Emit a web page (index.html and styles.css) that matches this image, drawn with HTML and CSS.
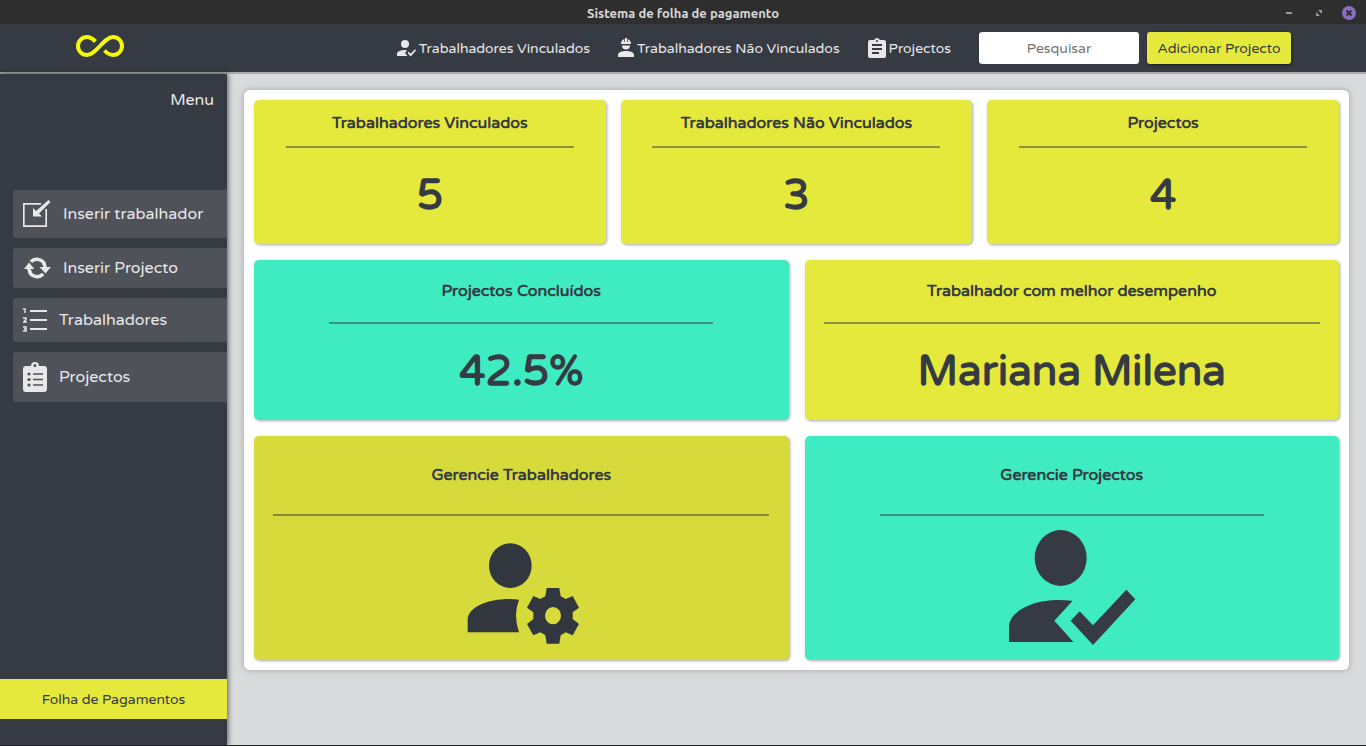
FILE: index.html
```html
<!DOCTYPE html>
<html lang="pt">
<head>
<meta charset="utf-8">
<title>Sistema de folha de pagamento</title>
<link rel="stylesheet" href="styles.css">
</head>
<body>
<div class="titlebar">
  <span></span>
  <span class="titlebar-text">Sistema de folha de pagamento</span>
  <div class="window-controls">
    <button type="button" aria-label="Minimizar"><svg width="14" height="14" viewBox="0 0 14 14"><path d="M4 6h6v2H4z" fill="#999"/></svg></button>
    <button type="button" aria-label="Restaurar"><svg width="14" height="14" viewBox="0 0 14 14"><path d="M6 4h4v4zM4 6v4h4z" fill="#999"/></svg></button>
    <button type="button" aria-label="Fechar"><svg width="14" height="14" viewBox="0 0 14 14"><circle cx="7" cy="7" r="7" fill="#8c6cc0"/><path d="M4.5 4.5l5 5m0-5l-5 5" stroke="#2e2e2e" stroke-width="1.8"/></svg></button>
  </div>
</div>
<header class="navbar">
  <a class="logo" href="#" aria-label="Início"><svg width="48" height="22" viewBox="0 0 48 22"><path d="M19.500 6.500C16.500 3.500 14 2 11 2a9 9 0 0 0 0 18C20 20 28 2 37 2a9 9 0 0 1 0 18c-3.500 0-6-1.800-8.500-4.500" fill="none" stroke="#f5fa05" stroke-width="4"/></svg></a>
  <nav class="nav-links">
    <a href="#"><svg width="19" height="17" viewBox="0 0 19 17" fill="#e8e8ea"><circle cx="8" cy="4" r="4"/><path d="M0 16v-2c0-3 4-4 8-4l2 .2L8 13l2.500 3z"/><path d="M10.500 13l1.200-1.200 2 2 4.200-4.600L19 10.500l-5.300 6z"/></svg>Trabalhadores Vinculados</a>
    <a href="#"><svg width="16" height="20" viewBox="0 0 16 20" fill="#e8e8ea"><path d="M3 6c0-3 1.500-4.300 3.300-5v3h.7V0h2v4h.7V1C11.500 1.700 13 3 13 6zM4 7.500h8a4 4 0 0 1-8 0zM0 19v-2c0-3 4-4 8-4s8 1 8 4v2z"/></svg>Trabalhadores Não Vinculados</a>
    <a href="#"><svg width="18" height="20" viewBox="0 0 18 20"><path fill="#e8e8ea" fill-rule="evenodd" d="M2 2h4.200a3 3 0 0 1 5.600 0H16a2 2 0 0 1 2 2v14a2 2 0 0 1-2 2H2a2 2 0 0 1-2-2V4a2 2 0 0 1 2-2zm7 0a1 1 0 1 0 0 2 1 1 0 0 0 0-2zM4 6v2h10V6zm0 4v2h10v-2zm0 4v2h7v-2z"/></svg>Projectos</a>
  </nav>
  <form class="search">
    <input type="text" placeholder="Pesquisar" aria-label="Pesquisar">
    <button type="button">Adicionar Projecto</button>
  </form>
</header>
<div class="layout">
  <aside class="sidebar">
    <h2 class="menu-title">Menu</h2>
    <nav class="menu">
      <a class="menu-item insert-worker" href="#"><svg width="28" height="28" viewBox="0 0 28 28"><path d="M18 3.800H.8v22.400h22.400V9" fill="none" stroke="#e8e8ea" stroke-width="1.700"/><path d="M25.500 0L27.500 2 16 13.500l3 3h-9V8l3 3z" fill="#e8e8ea"/></svg><span>Inserir trabalhador</span></a>
      <a class="menu-item insert-project" href="#"><svg width="28" height="22" viewBox="0 0 28 22"><path d="M5.800 11.500a8.300 8.300 0 0 0 1.800 4.200M22.200 10a8.300 8.300 0 0 0-1.600-3.700" fill="none" stroke="#e8e8ea" stroke-width="3.500"/><path d="M7.800 4.800A8.500 8.500 0 0 1 21.500 7M20.200 17A8.500 8.500 0 0 1 6.500 15" fill="none" stroke="#e8e8ea" stroke-width="3.500"/><path d="M1 12l5-6.500 5.500 6.500zM16.500 10H28l-5.500 6.500z" fill="#e8e8ea"/></svg><span>Inserir Projecto</span></a>
      <a class="menu-item list-workers" href="#"><svg width="24" height="24" viewBox="0 0 24 24" fill="none" stroke="#e8e8ea"><path d="M7 3h17M7 12h17M7 21h17" stroke-width="2"/><path d="M0 1h2v4M0 10h3v1.500L.7 14H4M0 19h3v4H0M1 21h2" stroke-width="1.400"/></svg><span>Trabalhadores</span></a>
      <a class="menu-item list-projects" href="#"><svg width="24" height="30" viewBox="0 0 24 30"><path fill="#e8e8ea" fill-rule="evenodd" d="M3 4h5a4 4 0 0 1 8 0h5a3 3 0 0 1 3 3v20a3 3 0 0 1-3 3H3a3 3 0 0 1-3-3V7a3 3 0 0 1 3-3zm9-2a1.500 1.500 0 1 0 0 3 1.500 1.500 0 0 0 0-3z"/><path d="M10 12h10M10 17.500h10M10 23h10" stroke="#4f5259" stroke-width="1.600"/><g fill="#4f5259"><circle cx="6" cy="12" r="1.600"/><circle cx="6" cy="17.500" r="1.600"/><circle cx="6" cy="23" r="1.600"/></g></svg><span>Projectos</span></a>
    </nav>
    <button class="payroll" type="button">Folha de Pagamentos</button>
  </aside>
  <main class="content">
    <div class="panel">
      <section class="row row-stats">
        <article class="card"><h3>Trabalhadores Vinculados</h3><hr><p>5</p></article>
        <article class="card"><h3>Trabalhadores Não Vinculados</h3><hr><p>3</p></article>
        <article class="card"><h3>Projectos</h3><hr><p>4</p></article>
      </section>
      <section class="row row-results">
        <article class="card teal medium"><h3>Projectos Concluídos</h3><hr><p>42.5%</p></article>
        <article class="card wide"><h3>Trabalhador com melhor desempenho</h3><hr><p>Mariana Milena</p></article>
      </section>
      <section class="row row-manage">
        <article class="card dim wide"><h3>Gerencie Trabalhadores</h3><hr>
          <svg width="128" height="136" viewBox="51 0 384 408" fill="#32363e"><ellipse cx="211" cy="137" rx="64" ry="67"/><path d="M83 337V299C84 262 140 237 210 237Q224 237 237 239Q219 285 237 337Z"/><path fill-rule="evenodd" d="M320 204H358L362 229 377 237 398 228 417 263 398 277V297L417 312 398 346 377 337 362 346 358 371H320L316 346 301 337 280 346 261 312 280 297V277L261 263 280 228 301 237 316 229ZM339 261a24 26 0 1 0 0 52 24 26 0 0 0 0-52Z"/></svg>
        </article>
        <article class="card teal medium"><h3>Gerencie Projectos</h3><hr>
          <svg width="128" height="136" viewBox="84 30 384 408" fill="#363a42"><ellipse cx="242" cy="144" rx="78" ry="84"/><path d="M87 396V350C88 304 160 270 232 270Q255 270 278 272L223 332 280 396Z"/><path d="M272 332L299 304 339 346 439 239 466 268 339 405Z"/></svg>
        </article>
      </section>
    </div>
  </main>
</div>
</body>
</html>
```
FILE: styles.css
```css
* { box-sizing: border-box; }
body {
  margin: 0;
  min-height: 100vh;
  display: flex;
  flex-direction: column;
  font-family: "Varela Round", "Noto Sans", "Open Sans", sans-serif;
  font-size: 14px;
  color: #363a42;
  background: #d9dadc;
  border-bottom: 1px solid #222;
}
h2, h3, p { margin: 0; }
a { color: inherit; text-decoration: none; }
button, input { font: inherit; border: 0; }

.titlebar {
  height: 24px;
  padding: 0 10px;
  display: grid;
  grid-template-columns: 1fr auto 1fr;
  align-items: center;
  background: #2e2e2e;
  color: #d8d8d8;
}
.titlebar-text { font: 600 13px/26px "Ubuntu", "Noto Sans", sans-serif; }
.window-controls { display: flex; justify-content: flex-end; gap: 16px; }
.window-controls button { padding: 0; background: none; display: flex; }

.navbar {
  height: 50px;
  padding: 0 75px 0 76px;
  display: flex;
  align-items: center;
  background: #363a42;
  border-bottom: 2px solid #a8a9ac;
}
.logo { display: flex; margin-right: auto; padding-bottom: 4px; }
.nav-links { display: flex; gap: 28px; color: #e8e8ea; }
.nav-links a { display: flex; align-items: center; gap: 3px; white-space: nowrap; }
.search { display: flex; gap: 8px; margin-left: 28px; }
.search input {
  width: 160px;
  height: 32px;
  padding: 0;
  text-align: center;
  background: #fff;
  border-radius: 3px;
}
.search input::placeholder { color: #757575; }
.search button {
  width: 144px;
  height: 32px;
  padding: 0;
  color: #363a42;
  background: #e5e93c;
  border-radius: 3px;
  box-shadow: 1px 1px 3px rgba(0, 0, 0, .5);
}

.layout { flex: 1; display: flex; }
.sidebar {
  width: 227px;
  display: flex;
  flex-direction: column;
  background: #363a42;
  color: #e8e8ea;
  box-shadow: 1px 0 5px rgba(0, 0, 0, .6);
}
.menu-title {
  padding: 14px 13px 0 0;
  text-align: right;
  font-size: 16px;
  line-height: 24px;
  font-weight: 400;
}
.menu { display: grid; gap: 10px; margin: 78px 0 0 13px; font-size: 16px; }
.menu-item {
  display: flex;
  align-items: center;
  gap: 12px;
  padding-left: 10px;
  background: #4f5259;
  border-radius: 3px 0 0 3px;
}
.insert-worker { height: 48px; }
.insert-project { height: 40px; }
.list-workers { height: 44px; }
.list-projects { height: 50px; }
.payroll {
  height: 40px;
  margin: auto 0 26px;
  color: #363a42;
  background: #e5e93c;
}

.content { flex: 1; padding: 16px 17px; }
.panel {
  display: grid;
  gap: 16px;
  padding: 10px;
  background: #fff;
  border-radius: 6px;
  box-shadow: 0 0 6px rgba(0, 0, 0, .25);
}
.row { display: grid; gap: 16px; grid-template-columns: 1fr 1fr; }
.row-stats { gap: 15px; grid-template-columns: repeat(3, 1fr); }
.card {
  display: flex;
  flex-direction: column;
  align-items: center;
  background: #e5e93c;
  border-radius: 5px;
  box-shadow: 1px 1px 3px rgba(0, 0, 0, .35);
}
.card.teal { background: #3fecc2; }
.card.dim { background: #d6da3a; }
.card h3 { font-size: 16px; font-weight: 700; line-height: 46px; }
.row-results h3 { line-height: 62px; }
.row-manage h3 { line-height: 78px; }
.card hr {
  width: 288px;
  max-width: 93%;
  height: 2px;
  margin: 0;
  border: 0;
  background: #363a42;
  opacity: .5;
}
.card.medium hr { width: 384px; }
.card.wide hr { width: 496px; }
.card p { font-size: 42px; font-weight: 700; line-height: 96px; }
.card svg { margin: 4px 0; }
```
